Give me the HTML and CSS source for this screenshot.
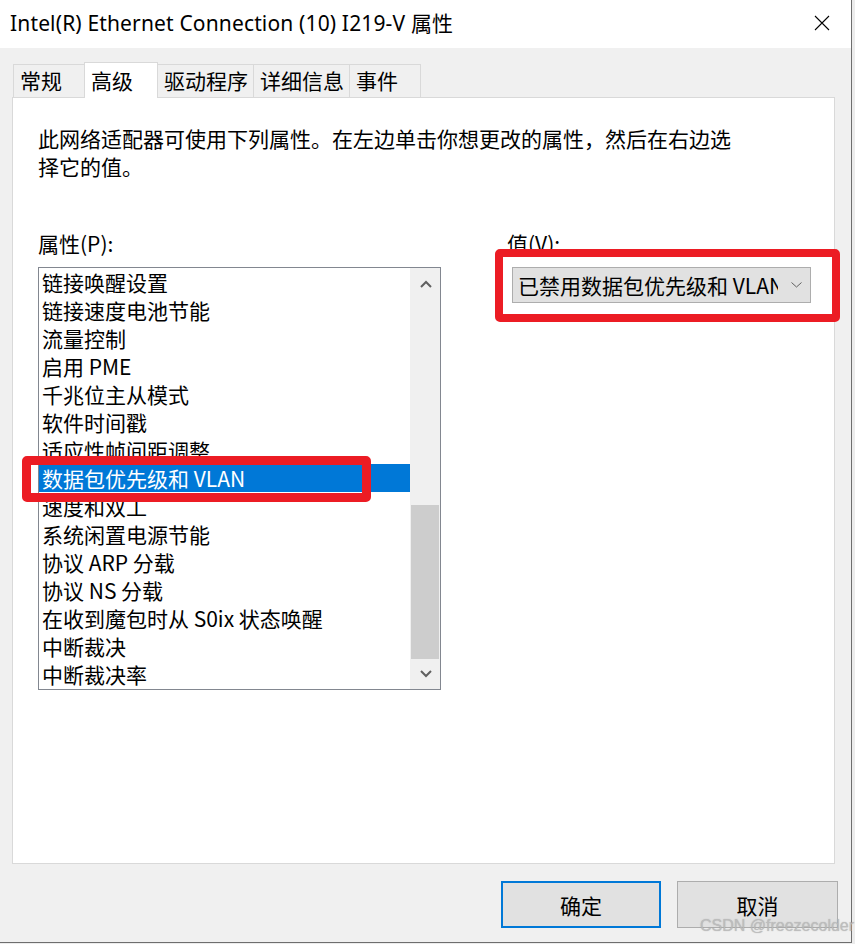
FILE: index.html
```html
<!DOCTYPE html>
<html lang="zh-CN">
<head>
<meta charset="utf-8">
<title>属性</title>
<link rel="stylesheet" href="styles.css">
</head>
<body>
<div class="window">
  <div class="titlebar">
    <span class="title">Intel(R) Ethernet Connection (10) I219-V 属性</span>
    <svg class="close" width="16" height="16" viewBox="0 0 16 16"><path d="M1 1 L15 15 M15 1 L1 15" stroke="#000" stroke-width="1.1" fill="none"/></svg>
  </div>
  <div class="tabs">
    <div class="tab">常规</div>
    <div class="tab active">高级</div>
    <div class="tab">驱动程序</div>
    <div class="tab">详细信息</div>
    <div class="tab">事件</div>
  </div>
  <div class="panel">
    <p class="desc">此网络适配器可使用下列属性。在左边单击你想更改的属性，然后在右边选择它的值。</p>
    <div class="props">
      <div class="col-left">
        <div class="label">属性(P):</div>
        <div class="listbox">
          <ul class="items">
            <li>链接唤醒设置</li>
            <li>链接速度电池节能</li>
            <li>流量控制</li>
            <li>启用 PME</li>
            <li>千兆位主从模式</li>
            <li>软件时间戳</li>
            <li>适应性帧间距调整</li>
            <li class="selected">数据包优先级和 VLAN</li>
            <li>速度和双工</li>
            <li>系统闲置电源节能</li>
            <li>协议 ARP 分载</li>
            <li>协议 NS 分载</li>
            <li>在收到魔包时从 S0ix 状态唤醒</li>
            <li>中断裁决</li>
            <li>中断裁决率</li>
          </ul>
          <div class="scrollbar">
            <div class="sb-btn"><svg width="12" height="8" viewBox="0 0 12 8"><path d="M1 7 L6 2 L11 7" stroke="#606060" stroke-width="2" fill="none"/></svg></div>
            <div class="sb-track"><div class="sb-thumb"></div></div>
            <div class="sb-btn"><svg width="12" height="8" viewBox="0 0 12 8"><path d="M1 1 L6 6 L11 1" stroke="#606060" stroke-width="2" fill="none"/></svg></div>
          </div>
        </div>
      </div>
      <div class="col-right">
        <div class="label">值(V):</div>
        <div class="combo">
          <span class="combo-text">已禁用数据包优先级和 VLAN</span>
          <svg class="combo-arrow" width="11" height="6" viewBox="0 0 11 6"><path d="M0.5 0.5 L5.5 5 L10.5 0.5" stroke="#606060" stroke-width="1" fill="none"/></svg>
        </div>
      </div>
    </div>
  </div>
  <div class="buttons">
    <button class="btn primary">确定</button>
    <button class="btn">取消</button>
  </div>
  <div class="mark mark-combo"></div>
  <div class="mark mark-item"></div>
  <div class="watermark">CSDN @freezecolder</div>
</div>
</body>
</html>
```

FILE: styles.css
```css
* { box-sizing: border-box; }
html, body { margin: 0; padding: 0; }
body {
  background: #ececec;
  font-family: "Noto Sans CJK SC", "Noto Sans", sans-serif;
  font-size: 21px;
  color: #000;
  overflow: hidden;
}
.window {
  position: relative;
  width: 852px;
  height: 943px;
  background: #f0f0f0;
  border-right: 1px solid #6e6e6e;
  border-bottom: 1px solid #6e6e6e;
  display: flex;
  flex-direction: column;
}
.titlebar {
  height: 48px;
  background: #fff;
  display: flex;
  align-items: center;
  padding: 0 21px 4px 10px;
}
.title {
  font-family: "Noto Sans", "Noto Sans CJK SC", sans-serif;
  font-size: 21px;
  letter-spacing: 0.15px;
}
.close { margin-left: auto; margin-top: 2px; }
.tabs {
  display: flex;
  align-items: flex-end;
  height: 35px;
  margin-top: 14px;
  padding-left: 13px;
}
.tab {
  min-width: 72px;
  height: 33px;
  line-height: 31px;
  padding: 0 5px 0 6px;
  border: 1px solid #d9d9d9;
  border-bottom: none;
  margin-right: -1px;
  background: #f0f0f0;
  white-space: nowrap;
}
.tab.active {
  min-width: 74px;
  height: 36px;
  line-height: 34px;
  margin-bottom: -1px;
  background: #fff;
  position: relative;
  z-index: 1;
}
.panel {
  height: 767px;
  margin: 0 16px 0 12px;
  background: #fff;
  border: 1px solid #d9d9d9;
  padding: 26px 0 0 25px;
}
.desc {
  margin: 0;
  width: 700px;
  line-height: 28px;
}
.props {
  display: flex;
  margin-top: 49px;
}
.label { line-height: 28px; height: 28px; }
.col-left { width: 403px; }
.col-right { margin-left: 66px; }
.listbox {
  margin-top: 10px;
  width: 403px;
  height: 423px;
  border: 1px solid #828790;
  display: flex;
}
.items {
  list-style: none;
  margin: 0;
  padding: 0;
  flex: 1;
}
.items li {
  height: 28px;
  line-height: 28px;
  padding-left: 3px;
  white-space: nowrap;
}
.items li.selected {
  background: #0078d7;
  color: #fff;
}
.scrollbar {
  width: 30px;
  background: #f0f0f0;
  display: flex;
  flex-direction: column;
  padding-left: 1px;
}
.sb-btn {
  height: 32px;
  display: flex;
  align-items: center;
  justify-content: center;
}
.sb-track {
  flex: 1;
  display: flex;
  flex-direction: column;
  justify-content: flex-end;
  padding-right: 1px;
}
.sb-thumb {
  height: 154px;
  background: #cdcdcd;
}
.scrollbar .sb-btn:last-child { height: 30px; }
.combo {
  margin: 10px 0 0 5px;
  width: 299px;
  height: 36px;
  background: #e1e1e1;
  border: 1px solid #adadad;
  display: flex;
  align-items: center;
  padding-left: 5px;
}
.combo-text {
  width: 260px;
  overflow: hidden;
  white-space: nowrap;
  line-height: 28px;
}
.combo-arrow { margin-left: 13px; }
.buttons {
  display: flex;
  justify-content: flex-end;
  gap: 16px;
  margin-top: 17px;
  padding-right: 13px;
}
.btn {
  width: 161px;
  height: 47px;
  background: #e1e1e1;
  border: 1px solid #adadad;
  font-family: "Noto Sans CJK SC", sans-serif;
  font-size: 21px;
  color: #000;
  padding: 0;
}
.btn.primary {
  width: 160px;
  border: 2px solid #0078d7;
}
.mark {
  position: absolute;
  border-style: solid;
  border-color: #ec1c24;
  border-radius: 5px;
  z-index: 5;
}
.mark-combo {
  left: 495px;
  top: 249px;
  width: 345px;
  height: 73px;
  border-width: 8px;
}
.mark-item {
  left: 22px;
  top: 456px;
  width: 349px;
  height: 46px;
  border-width: 9px;
}
.watermark {
  position: absolute;
  left: 700px;
  top: 917px;
  font-family: "Liberation Sans", sans-serif;
  font-size: 16px;
  color: rgba(190, 190, 190, 0.9);
  text-shadow: 0 0 1px rgba(120,120,120,0.5);
  white-space: nowrap;
  z-index: 6;
}
```
